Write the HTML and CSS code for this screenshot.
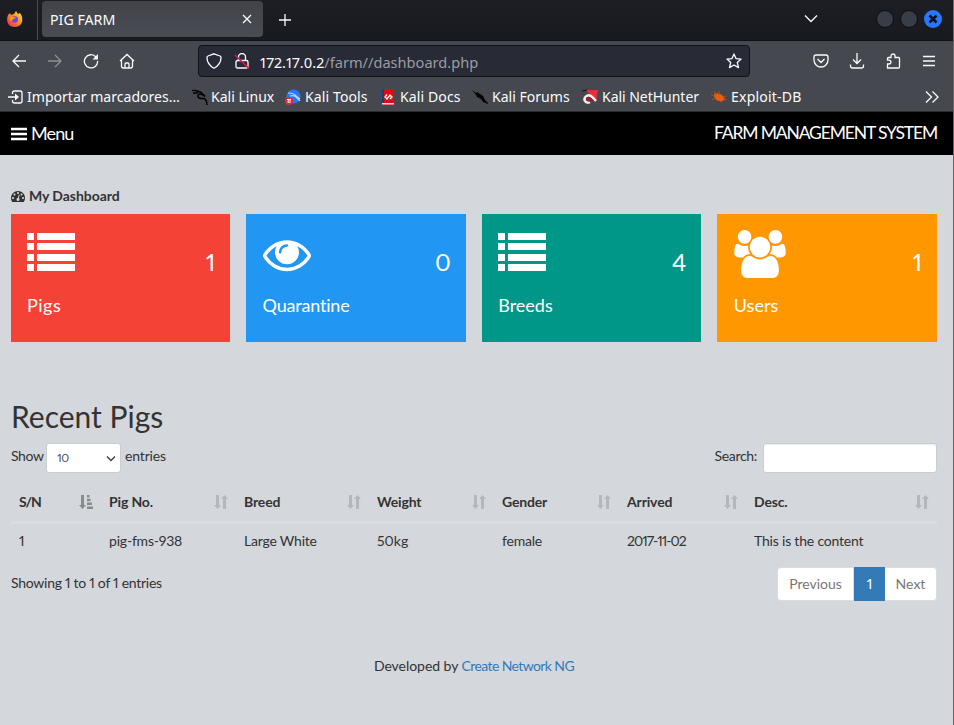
FILE: index.html
```html
<!DOCTYPE html>
<html lang="en">
<head>
<meta charset="utf-8">
<title>PIG FARM</title>
<link rel="stylesheet" href="styles.css">
</head>
<body>
<svg class="defs" aria-hidden="true">
  <symbol id="list" viewBox="0 0 48 48"><path d="M0 3h7v7H0zM0 13h7v7H0zM0 24h7v7H0zM0 34h7v7H0zM10 3h38v7H10zM10 13h38v7H10zM10 24h38v7H10zM10 34h38v7H10z"/></symbol>
  <symbol id="sort" viewBox="0 0 14 16"><path d="M2 1h3v10h2l-3.500 4L0 11h2zM9 15V5H7l3.500-4L14 5h-2v10z"/></symbol>
  <symbol id="dragon" viewBox="0 0 16 16"><path d="M0 1.500h4l5 2 4 3.500M1 4l5 0" fill="none" stroke="#000" stroke-width="1.500"/><path d="M13 7.500Q7 3 6 6.500T12 9.500Q15 11 15 16" fill="none" stroke="#000" stroke-width="1.500"/></symbol>
</svg>

<div class="window">
  <header class="tabs">
    <div class="fx">
      <svg width="16" height="16" viewBox="0 0 16 16"><defs><linearGradient id="fire" x1="1" y1="0" x2="0" y2="1"><stop offset="0" stop-color="#ffe94a"/><stop offset=".45" stop-color="#ff980e"/><stop offset="1" stop-color="#f5156c"/></linearGradient></defs><path fill="url(#fire)" d="M1 4l2-2 1 2 3-1 2-3 2 3 2-1c4 5 3 14-5 14C0 16-1 9 1 4z"/><circle cx="7.800" cy="8.500" r="3.300" fill="#7542e5"/><path fill="#ff9a16" d="M3 6l4 0 2 1-3 1-1 2-2-1z"/></svg>
    </div>
    <div class="tab"><span>PIG FARM</span>
      <svg width="10" height="10" viewBox="0 0 10 10" class="line"><path d="M1 1l8 8M9 1l-8 8"/></svg>
    </div>
    <svg class="line plus" width="14" height="14" viewBox="0 0 14 14"><path d="M7 1v12M1 7h12"/></svg>
    <svg class="line chev" width="14" height="9" viewBox="0 0 14 9"><path d="M1 1.500l6 6 6-6"/></svg>
    <div class="wm"><i></i><i></i><b><svg width="10" height="10" viewBox="0 0 10 10"><path d="M1.500 1.500l7 7M8.500 1.500l-7 7" stroke="#0b1020" stroke-width="2.600"/></svg></b></div>
  </header>

  <nav class="toolbar">
    <div class="nav">
      <svg class="line" width="16" height="16" viewBox="0 0 16 16"><path d="M15 8H2M8 2L2 8l6 6"/></svg>
      <svg class="line dim" width="16" height="16" viewBox="0 0 16 16"><path d="M1 8h13M8 2l6 6-6 6"/></svg>
      <svg class="line" width="16" height="16" viewBox="0 0 16 16"><path d="M13 4A6.600 6.600 0 1 0 14.600 8"/><path class="solid" d="M15 1v5.500H9.500z"/></svg>
      <svg class="line" width="16" height="16" viewBox="0 0 16 16"><path d="M1 8l7-6.500L15 8M2.500 7v6q0 2 2 2h7q2 0 2-2V7M6 15v-4q0-1 1-1h2q1 0 1 1v4"/></svg>
    </div>
    <div class="url">
      <svg class="line" width="16" height="16" viewBox="0 0 16 16"><path d="M8 .8l6 2.200q1 .4 1 1.500c0 5-2 8-7 10.700C3 12.500 1 9.500 1 4.500Q1 3.400 2 3z"/></svg>
      <svg class="line lock" width="16" height="16" viewBox="0 0 16 16"><path d="M3.500 7.500h9q1.500 0 1.500 1.500v4.500q0 1.500-1.500 1.500h-9Q2 15 2 13.500V9q0-1.500 1.500-1.500zM4.500 7V4a3.500 3.500 0 0 1 7 0v3"/><path class="slash" d="M1 2l14 13.500"/></svg>
      <span class="addr">172.17.0.2<em>/farm//dashboard.php</em></span>
      <svg class="line star" width="16" height="16" viewBox="0 0 16 16"><path d="M8 1l2 4.600 5.100.5-3.800 3.400 1.200 5.100L8 12l-4.500 2.600 1.200-5.100L.9 6.100 6 5.600z" stroke-linejoin="round"/></svg>
    </div>
    <div class="tools">
      <svg class="line" width="16" height="16" viewBox="0 0 16 16"><path d="M3 2h10q2 0 2 2v3a7 7 0 0 1-14 0V4q0-2 2-2zM4.500 6L8 9.500 11.500 6"/></svg>
      <svg class="line" width="16" height="16" viewBox="0 0 16 16"><path d="M8 0v10M4 6.500l4 4 4-4M1.500 11.500v1.500q0 2 2 2h9q2 0 2-2v-1.500"/></svg>
      <svg class="line" width="16" height="16" viewBox="0 0 16 16"><path d="M2.500 15V11H4a1.800 1.800 0 0 0 0-3.800H2.500V5.500q0-1 1-1H6V3a2 2 0 0 1 4 0v1.500h3.500q1 0 1 1V14q0 1-1 1z"/></svg>
      <svg class="line" width="16" height="16" viewBox="0 0 16 16"><path d="M2 3.500h12M2 8h12M2 12.500h12"/></svg>
    </div>
  </nav>

  <div class="bookmarks">
    <span class="bm b1"><svg class="line" width="16" height="16" viewBox="0 0 16 16"><path d="M4.500 5V4q0-2 2-2H12q2 0 2 2v8q0 2-2 2H6.500q-2 0-2-2v-1M0 8h10"/><path class="solid" d="M7 4.500L11 8l-4 3.500z"/></svg>Importar marcadores…</span>
    <span class="bm b2"><svg width="16" height="16"><use href="#dragon"/></svg>Kali Linux</span>
    <span class="bm b3"><svg width="16" height="16" viewBox="0 0 16 16"><circle cx="8.500" cy="7.500" r="7" fill="#2777ff"/><path d="M3 4q5 0 7 2t5 4M5 7q4-1 6 1t4 4" fill="none" stroke="#b9d5ff" stroke-width="1.200"/><circle cx="4" cy="12" r="4" fill="#e8282d"/><path d="M2 10.500h4M3.200 10.500v3.500M5 10.500v3.500" stroke="#fff"/></svg>Kali Tools</span>
    <span class="bm b4"><svg width="16" height="16" viewBox="0 0 16 16"><path fill="#d80d16" d="M3 0h11v16H3z"/><path fill="#17407f" d="M2 0h2v14H2z"/><path fill="#f0d4d4" d="M2 14h12v1.500H2z"/><path d="M7 5.500L5 8l2 2 3-4 2 2-2 2" fill="none" stroke="#fff" stroke-width="1.300"/></svg>Kali Docs</span>
    <span class="bm b5"><svg width="16" height="16" viewBox="0 0 16 16"><path d="M0 1l4 3 1-1 6 4 2 4 3 3v1l-5-2-2-3-4-2-1-2z"/></svg>Kali Forums</span>
    <span class="bm b6"><svg width="16" height="16" viewBox="0 0 16 16"><path fill="#ef2b3a" d="M4 1l12 0-2 12-3-3z"/><path d="M0 2l5-1" stroke="#111"/><path d="M8 13C3 15 1 10 4 7.500c3-3 6 0 10 4.500" fill="none" stroke="#f6eeee" stroke-width="2.600"/><path d="M8 12q-4 0-3-3 2-2 6 3" fill="none" stroke="#b70d23" stroke-width="1.500"/></svg>Kali NetHunter</span>
    <span class="bm b7"><svg width="16" height="16" viewBox="0 0 16 16"><path fill="#e95d0f" d="M3 5q5-2 9 2l2 3q-2 3-5 2-5 0-6-5z"/><path d="M5 6L3 2M8 6V2M2 7L0 5M5 9l-4 2M9 12l2 2M12 8l3-1M12 10l4 1" stroke="#a8501f"/></svg>Exploit-DB</span>
    <svg class="line more" width="14" height="14" viewBox="0 0 14 14"><path d="M1 1.500L6.500 7 1 12.500M7.500 1.500L13 7l-5.500 5.500"/></svg>
  </div>

  <div class="topbar">
    <span class="menu"><svg width="16" height="14" viewBox="0 0 16 14"><path fill="#fff" d="M0 .8h16v2.400H0zM0 5.800h16v2.400H0zM0 10.800h16v2.400H0z"/></svg><span>Menu</span></span>
    <span class="brand">FARM MANAGEMENT SYSTEM</span>
  </div>

  <main>
    <h5><svg width="14" height="14" viewBox="0 0 1792 1792"><path d="M384 1152q0-53-37.500-90.500t-90.500-37.500-90.500 37.500-37.500 90.500 37.500 90.500 90.500 37.500 90.500-37.500 37.500-90.500zm192-448q0-53-37.500-90.500t-90.500-37.500-90.500 37.500-37.500 90.500 37.500 90.500 90.500 37.500 90.500-37.500 37.500-90.500zm428 481l101-382q6-26-7.500-48.500t-38.500-29.500-48 6.500-30 39.500l-101 382q-60 5-107 43.500t-63 98.500q-20 77 20 146t117 89 146-20 89-117q16-60-6-117t-72-91zm660-33q0-53-37.500-90.500t-90.500-37.500-90.500 37.500-37.500 90.500 37.500 90.500 90.500 37.500 90.500-37.500 37.500-90.500zm-640-640q0-53-37.500-90.500t-90.500-37.500-90.500 37.500-37.500 90.500 37.500 90.500 90.500 37.500 90.500-37.500 37.500-90.500zm448 192q0-53-37.500-90.500t-90.500-37.500-90.500 37.500-37.500 90.500 37.500 90.500 90.500 37.500 90.500-37.500 37.500-90.500zm320 448q0 261-141 483-19 29-54 29h-1402q-35 0-54-29-141-221-141-483 0-182 71-348t191-286 286-191 348-71 348 71 286 191 191 286 71 348z" fill="#333"/></svg>My Dashboard</h5>

    <section class="cards">
      <div class="card red"><div class="top"><svg width="48" height="48"><use href="#list"/></svg><strong>1</strong></div><p class="l-pigs">Pigs</p></div>
      <div class="card blue"><div class="top"><svg width="48" height="48" viewBox="0 0 1792 1792"><path d="M1664 960q-152-236-381-353 61 104 61 225 0 185-131.500 316.500t-316.500 131.500-316.500-131.500-131.500-316.500q0-121 61-225-229 117-381 353 133 205 333.500 326.500t434.500 121.500 434.500-121.500 333.500-326.500zm-720-384q0-20-14-34t-34-14q-125 0-214.500 89.500t-89.500 214.500q0 20 14 34t34 14 34-14 14-34q0-86 61-147t147-61q20 0 34-14t14-34zm848 384q0 34-20 69-140 230-376.500 368.500t-499.500 138.500-499.500-139-376.500-368q-20-35-20-69t20-69q140-229 376.500-368t499.500-139 499.500 139 376.500 368q20 35 20 69z"/></svg><strong>0</strong></div><p class="l-quar">Quarantine</p></div>
      <div class="card teal"><div class="top"><svg width="48" height="48"><use href="#list"/></svg><strong>4</strong></div><p>Breeds</p></div>
      <div class="card orange"><div class="top"><svg width="52" height="48" viewBox="64 0 1920 1792"><path d="M657 896q-162 5-265 128h-134q-82 0-138-40.500t-56-118.500q0-353 124-353 6 0 43.500 21t97.500 42.500 119 21.500q67 0 133-23-5 37-5 66 0 139 81 256zm1071 637q0 120-73 189.500t-194 69.500h-874q-121 0-194-69.500t-73-189.500q0-53 3.500-103.500t14-109 26.500-108.500 43-97.500 62-81 85.500-53.500 111.500-20q10 0 43 21.500t73 48 107 48 135 21.500 135-21.500 107-48 73-48 43-21.500q61 0 111.500 20t85.500 53.500 62 81 43 97.500 26.500 108.500 14 109 3.500 103.500zm-1024-1277q0 106-75 181t-181 75-181-75-75-181 75-181 181-75 181 75 75 181zm704 384q0 159-112.500 271.500t-271.500 112.500-271.500-112.500-112.500-271.500 112.500-271.500 271.500-112.500 271.500 112.500 112.500 271.500zm576 225q0 78-56 118.500t-138 40.500h-134q-103-123-265-128 81-117 81-256 0-29-5-66 66 23 133 23 59 0 119-21.500t97.500-42.500 43.500-21q124 0 124 353zm-128-609q0 106-75 181t-181 75-181-75-75-181 75-181 181-75 181 75 75 181z"/></svg><strong>1</strong></div><p>Users</p></div>
    </section>

    <h2>Recent Pigs</h2>

    <div class="controls">
      <span class="show">Show</span>
      <span class="select">10<svg width="10" height="7" viewBox="0 0 10 7"><path d="M1 1.500l4 4 4-4" fill="none" stroke="#444" stroke-width="1.500"/></svg></span>
      <span class="entries">entries</span>
      <span class="search">Search:</span>
      <span class="field"></span>
    </div>

    <table>
      <colgroup><col class="c1"><col class="c2"><col class="c3"><col class="c4"><col class="c5"><col class="c6"><col class="c7"></colgroup>
      <thead><tr>
        <th><div><span class="t-sn">S/N</span><svg class="active" width="14" height="16" viewBox="0 0 14 16"><path d="M2 1h3v10h2l-3.500 4L0 11h2zM8 1h2.500v2.500H8zM8 4.800h3.500v2.500H8zM8 8.600h5v2.500H8zM8 12.500h6V15H8z"/></svg></div></th>
        <th><div><span>Pig No.</span><svg width="14" height="16"><use href="#sort"/></svg></div></th>
        <th><div><span>Breed</span><svg width="14" height="16"><use href="#sort"/></svg></div></th>
        <th><div><span>Weight</span><svg width="14" height="16"><use href="#sort"/></svg></div></th>
        <th><div><span>Gender</span><svg width="14" height="16"><use href="#sort"/></svg></div></th>
        <th><div><span>Arrived</span><svg width="14" height="16"><use href="#sort"/></svg></div></th>
        <th><div><span>Desc.</span><svg width="14" height="16"><use href="#sort"/></svg></div></th>
      </tr></thead>
      <tbody><tr><td>1</td><td class="t-pig">pig-fms-938</td><td class="t-desc">Large White</td><td>50kg</td><td class="t-pig">female</td><td class="t-date">2017-11-02</td><td class="t-desc">This is the content</td></tr></tbody>
    </table>

    <div class="foot">
      <span class="info">Showing 1 to 1 of 1 entries</span>
      <div class="pager"><span class="prev">Previous</span><span class="cur">1</span><span class="next">Next</span></div>
    </div>

    <footer>Developed by <a>Create Network NG</a></footer>
  </main>
</div>
</body>
</html>
```
FILE: styles.css
```css
* { box-sizing: border-box; }
body { margin: 0; font-family: Lato, "Open Sans", sans-serif; font-size: 14px; line-height: 20px; color: #333; font-variant-numeric: proportional-nums; }
svg { display: block; flex: none; }
.defs { display: none; }
.window { width: 954px; height: 725px; overflow: hidden; background: #d4d7dc; border-right: 1px solid #65676d; }
.line path { fill: none; stroke: #fbfbfe; stroke-width: 1.3; }
.line .solid { fill: #fbfbfe; stroke: none; }
.line .slash { stroke: #e1164c; stroke-width: 1.6; }
.dim { opacity: .4; }

.tabs, .toolbar, .bookmarks { font-family: "Noto Sans", sans-serif; font-size: 14.2px; color: #fbfbfe; display: flex; align-items: center; }
.tabs { height: 41px; background: linear-gradient(#1d1e23, #191a1f); border-bottom: 1px solid #101115; }
.fx { width: 38px; height: 40px; padding: 11px 0 0 7px; border-right: 1px solid #4c4d52; }
.tab { width: 221px; height: 36px; margin: -2px 0 0 4px; padding: 0 11px 0 8px; border-radius: 4px; background: linear-gradient(#414349, #494c53); display: flex; align-items: center; justify-content: space-between; }
.tab span { padding-top: 1px; }
.plus { margin-left: 15px; }
.chev { margin-left: auto; margin-right: 58px; margin-top: -3px; }
.wm { display: flex; gap: 6px; margin-right: 11px; margin-top: -3px; }
.wm i, .wm b { width: 18px; height: 18px; border-radius: 50%; background: #393d48; border: 1px solid #0b0c10; }
.wm b { background: #2777ff; border: 0; display: grid; place-items: center; }

.toolbar { height: 41px; background: #45484f; padding-bottom: 1px; }
.nav { display: flex; gap: 20px; padding-left: 11px; width: 198px; }
.url { width: 552px; height: 32px; border: 1px solid #111217; border-radius: 4px; background: #282a36; display: flex; align-items: center; padding: 0 7px; }
.lock { margin-left: 12px; }
.addr { margin-left: 10px; padding-top: 1px; font-size: 14.6px; white-space: nowrap; }
.addr em { font-style: normal; color: #9b9ca3; }
.star { margin-left: auto; }
.tools { display: flex; gap: 20px; margin-left: auto; margin-right: 16px; }
.bookmarks { height: 30px; background: #45484f; border-bottom: 1px solid #2b2d32; font-size: 14.05px; padding-left: 8px; }
.bm { display: flex; align-items: center; gap: 3px; white-space: nowrap; flex: none; }
.b1 { width: 184px; }
.b2 { width: 93px; }
.b3, .b4, .b5, .b6, .b7 { gap: 4px; }
.b3 { width: 95px; letter-spacing: .1px; }
.b4 { width: 92px; letter-spacing: .1px; }
.b5 { width: 110px; }
.b6 { width: 129px; letter-spacing: -.05px; }
.b7 { letter-spacing: .2px; }
.more { margin-left: auto; margin-right: 14px; }

.topbar { height: 43px; background: #000; color: #fff; display: flex; align-items: center; justify-content: space-between; padding: 0 16px 2px 11px; font-size: 18px; }
.menu { display: flex; align-items: center; gap: 4px; letter-spacing: -.9px; }
.menu svg { position: relative; top: 1px; }
.brand { font-size: 17.5px; letter-spacing: -1.15px; }

main { padding: 0 16px 0 11px; }
h5 { margin: 31px 0 8px; font-size: 14px; line-height: 20px; font-weight: 700; display: flex; align-items: center; gap: 4px; letter-spacing: -.05px; }
.cards { display: grid; grid-template-columns: repeat(4, 1fr); gap: 16px; margin-left: -.4px; }
.card { height: 128px; padding: 16px 15px 16px 16.4px; color: #fff; }
.card svg { fill: #fff; }
.top { display: flex; justify-content: space-between; height: 48px; }
.top strong { font-size: 24px; font-weight: 400; line-height: 64px; }
.card p { margin: 16px 0 0; font-size: 18px; line-height: 22px; }
.card .l-pigs { letter-spacing: .5px; }
.card .l-quar { letter-spacing: -.2px; }
.red { background: #f44336; }
.blue { background: #2196f3; }
.teal { background: #009688; }
.orange { background: #ff9800; }

h2 { margin: 58px 0 10px; font-size: 30px; line-height: 33px; font-weight: 400; letter-spacing: 0; }
.controls { display: flex; height: 30px; }
.controls > span:not(.select):not(.field) { line-height: 26px; }
.show { width: 35px; letter-spacing: -.4px; }
.select { width: 75px; height: 30px; background: #fff; border: 1px solid #ccc; border-radius: 3px; font-size: 12px; letter-spacing: -.5px; color: #555; padding: 0 4px 0 10px; display: flex; align-items: center; justify-content: space-between; }
.entries { margin-left: 4px; letter-spacing: -.15px; }
.search { margin-left: auto; letter-spacing: -.3px; }
.field { width: 174px; height: 30px; margin-left: 6px; background: #fff; border: 1px solid #ccc; border-radius: 3px; box-shadow: inset 0 1px 1px rgba(0,0,0,.075); }

table { width: 100%; border-collapse: collapse; table-layout: fixed; margin-top: 9px; }
.c1 { width: 90px; } .c2 { width: 135px; } .c3 { width: 133px; } .c4 { width: 125px; } .c5 { width: 125px; } .c6 { width: 127px; }
th, td { text-align: left; padding: 0 8px; white-space: nowrap; }
th { height: 40px; border-bottom: 3px solid #ddd; padding-top: 2px; letter-spacing: -.15px; }
th div { display: flex; justify-content: space-between; align-items: center; }
th svg { fill: #b4b8be; }
th svg.active { fill: #888a8e; }
td { height: 38px; padding-bottom: 2px; }
.t-sn { letter-spacing: -1.1px; }
.t-pig { letter-spacing: -.2px; }
.t-date { letter-spacing: -.95px; }
.t-desc { letter-spacing: -.2px; }
.foot { display: flex; justify-content: space-between; margin-top: 7px; }
.info { line-height: 32px; letter-spacing: -.27px; }
.pager { display: flex; height: 34px; line-height: 32px; color: #777; }
.pager span { background: #fff; border: 1px solid #ddd; text-align: center; }
.pager .prev { width: 77px; border-radius: 4px 0 0 4px; }
.pager .cur { width: 31px; background: #337ab7; border-color: #337ab7; color: #fff; }
.pager .next { width: 52px; border-left: 0; border-radius: 0 4px 4px 0; }
footer { margin: 55px 0 0; text-align: center; letter-spacing: -.05px; }
footer a { color: #337ab7; letter-spacing: -.6px; }
```
